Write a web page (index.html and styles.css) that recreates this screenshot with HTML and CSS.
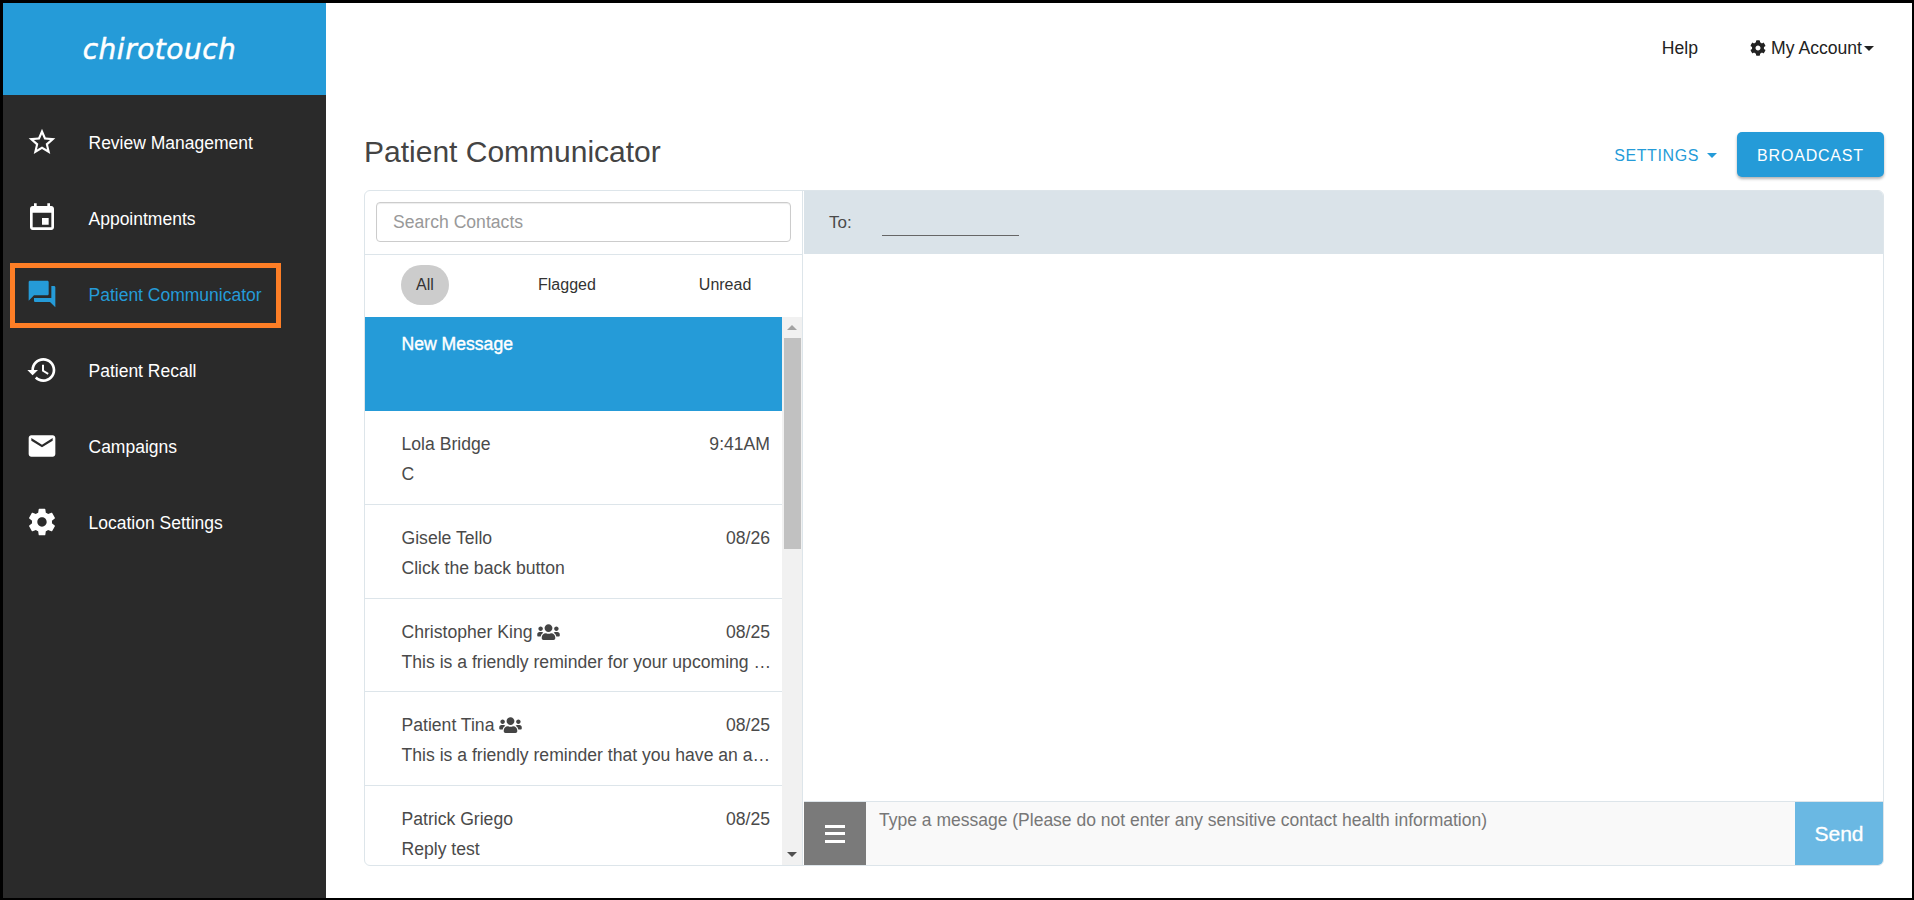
FILE: index.html
```html
<!DOCTYPE html>
<html lang="en">
<head>
    <meta charset="UTF-8">
    <meta name="viewport" content="width=device-width, initial-scale=1.0">
    <title>Patient Communicator</title>
    <link rel="stylesheet" href="styles.css">
</head>
<body>
    <div class="frame">
        <aside class="sidebar">
            <div class="brand"><span class="brand-name">chirotouch</span></div>
            <nav class="nav">
                <a class="nav-item">
                    <svg class="nav-icon" viewBox="0 0 24 24"><path d="M22 9.24l-7.19-.62L12 2 9.19 8.63 2 9.24l5.46 4.73L5.82 21 12 17.27 18.18 21l-1.63-7.03L22 9.24zM12 15.4l-3.76 2.27 1-4.28-3.32-2.88 4.38-.38L12 6.1l1.71 4.04 4.38.38-3.32 2.88 1 4.28L12 15.4z"/></svg>
                    <span>Review Management</span>
                </a>
                <a class="nav-item">
                    <svg class="nav-icon" viewBox="0 0 24 24"><path d="M17 12h-5v5h5v-5zM16 1v2H8V1H6v2H5c-1.11 0-1.99.9-1.99 2L3 19c0 1.1.89 2 2 2h14c1.1 0 2-.9 2-2V5c0-1.1-.9-2-2-2h-1V1h-2zm3 18H5V8h14v11z"/></svg>
                    <span>Appointments</span>
                </a>
                <a class="nav-item active">
                    <svg class="nav-icon" viewBox="0 0 24 24"><path d="M21 6h-2v9H6v2c0 .55.45 1 1 1h11l4 4V7c0-.55-.45-1-1-1zm-4 6V3c0-.55-.45-1-1-1H3c-.55 0-1 .45-1 1v14l4-4h10c.55 0 1-.45 1-1z"/></svg>
                    <span>Patient Communicator</span>
                </a>
                <a class="nav-item">
                    <svg class="nav-icon" viewBox="0 0 24 24"><path d="M13 3c-4.97 0-9 4.03-9 9H1l3.89 3.89.07.14L9 12H6c0-3.87 3.13-7 7-7s7 3.13 7 7-3.13 7-7 7c-1.93 0-3.68-.79-4.94-2.06l-1.42 1.42C8.27 19.99 10.51 21 13 21c4.97 0 9-4.03 9-9s-4.03-9-9-9zm-1 5v5l4.28 2.54.72-1.21-3.5-2.08V8H12z"/></svg>
                    <span>Patient Recall</span>
                </a>
                <a class="nav-item">
                    <svg class="nav-icon" viewBox="0 0 24 24"><path d="M20 4H4c-1.1 0-1.99.9-1.99 2L2 18c0 1.1.9 2 2 2h16c1.1 0 2-.9 2-2V6c0-1.1-.9-2-2-2zm0 4l-8 5-8-5V6l8 5 8-5v2z"/></svg>
                    <span>Campaigns</span>
                </a>
                <a class="nav-item">
                    <svg class="nav-icon" viewBox="0 0 24 24"><path d="M19.43 12.98c.04-.32.07-.64.07-.98s-.03-.66-.07-.98l2.11-1.65c.19-.15.24-.42.12-.64l-2-3.46c-.12-.22-.39-.3-.61-.22l-2.49 1c-.52-.4-1.08-.73-1.69-.98l-.38-2.65C14.46 2.18 14.25 2 14 2h-4c-.25 0-.46.18-.49.42l-.38 2.65c-.61.25-1.17.59-1.69.98l-2.49-1c-.23-.09-.49 0-.61.22l-2 3.46c-.13.22-.07.49.12.64l2.11 1.65c-.04.32-.07.65-.07.98s.03.66.07.98l-2.11 1.65c-.19.15-.24.42-.12.64l2 3.46c.12.22.39.3.61.22l2.49-1c.52.4 1.08.73 1.69.98l.38 2.65c.03.24.24.42.49.42h4c.25 0 .46-.18.49-.42l.38-2.65c.61-.25 1.17-.59 1.69-.98l2.49 1c.23.09.49 0 .61-.22l2-3.46c.12-.22.07-.49-.12-.64l-2.11-1.65zM12 15.5c-1.93 0-3.5-1.57-3.5-3.5s1.57-3.5 3.5-3.5 3.5 1.57 3.5 3.5-1.57 3.5-3.5 3.5z"/></svg>
                    <span>Location Settings</span>
                </a>
            </nav>
            <div class="highlight-box"></div>
        </aside>

        <main class="main">
            <header class="topbar">
                <a class="top-link help-link">Help</a>
                <a class="top-link">
                    <svg class="gear-icon" viewBox="0 0 512 512"><path d="M487.4 315.7l-42.6-24.6c4.3-23.2 4.3-47 0-70.2l42.6-24.6c4.9-2.8 7.1-8.6 5.5-14-11.1-35.6-30-67.8-54.7-94.6-3.8-4.1-10-5.1-14.8-2.3L380.8 110c-17.9-15.4-38.5-27.3-60.8-35.1V25.8c0-5.6-3.9-10.5-9.4-11.7-36.7-8.2-74.3-7.8-109.2 0-5.5 1.2-9.4 6.1-9.4 11.7V75c-22.2 7.9-42.8 19.8-60.8 35.1L88.7 85.5c-4.9-2.8-11-1.9-14.8 2.3-24.7 26.7-43.6 58.9-54.7 94.6-1.7 5.4.6 11.2 5.5 14L67.3 221c-4.3 23.2-4.3 47 0 70.2l-42.6 24.6c-4.9 2.8-7.1 8.6-5.5 14 11.1 35.6 30 67.8 54.7 94.6 3.8 4.1 10 5.1 14.8 2.3l42.6-24.6c17.9 15.4 38.5 27.3 60.8 35.1v49.2c0 5.6 3.9 10.5 9.4 11.7 36.7 8.2 74.3 7.8 109.2 0 5.5-1.2 9.4-6.1 9.4-11.7v-49.2c22.2-7.9 42.8-19.8 60.8-35.1l42.6 24.6c4.9 2.8 11 1.9 14.8-2.3 24.7-26.7 43.6-58.9 54.7-94.6 1.5-5.5-.7-11.3-5.6-14.1zM256 336c-44.1 0-80-35.9-80-80s35.9-80 80-80 80 35.9 80 80-35.9 80-80 80z"/></svg>
                    My Account<span class="caret"></span>
                </a>
            </header>

            <div class="title-row">
                <h1 class="page-title">Patient Communicator</h1>
                <div class="title-actions">
                    <a class="settings-link">SETTINGS<span class="caret caret-blue"></span></a>
                    <button class="broadcast-btn">BROADCAST</button>
                </div>
            </div>

            <section class="panel">
                <div class="contacts">
                    <div class="search-box">
                        <input class="search-input" type="text" placeholder="Search Contacts">
                    </div>
                    <div class="tabs">
                        <span class="tab tab-all">All</span>
                        <span class="tab tab-flagged">Flagged</span>
                        <span class="tab">Unread</span>
                    </div>
                    <div class="list-wrap">
                        <ul class="contact-list">
                            <li class="contact new-message">
                                <div class="contact-top"><span>New Message</span></div>
                            </li>
                            <li class="contact">
                                <div class="contact-top"><span>Lola Bridge</span><span>9:41AM</span></div>
                                <div class="contact-msg">C</div>
                            </li>
                            <li class="contact">
                                <div class="contact-top"><span>Gisele Tello</span><span>08/26</span></div>
                                <div class="contact-msg">Click the back button</div>
                            </li>
                            <li class="contact">
                                <div class="contact-top">
                                    <span>Christopher King <svg class="group-icon" viewBox="0 0 640 512"><path d="M96 224c35.3 0 64-28.7 64-64s-28.7-64-64-64-64 28.7-64 64 28.7 64 64 64zm448 0c35.3 0 64-28.7 64-64s-28.7-64-64-64-64 28.7-64 64 28.7 64 64 64zm32 32h-64c-17.6 0-33.5 7.1-45.1 18.6 40.3 22.1 68.9 62 75.1 109.4h66c17.7 0 32-14.3 32-32v-32c0-35.3-28.7-64-64-64zm-256 0c61.9 0 112-50.1 112-112S381.9 32 320 32 208 82.1 208 144s50.1 112 112 112zm76.8 32h-8.3c-20.8 10-43.9 16-68.5 16s-47.6-6-68.5-16h-8.3C179.6 288 128 339.6 128 403.2V432c0 26.5 21.5 48 48 48h288c26.5 0 48-21.5 48-48v-28.8c0-63.6-51.6-115.2-115.2-115.2zm-223.7-13.4C161.5 263.1 145.6 256 128 256H64c-35.3 0-64 28.7-64 64v32c0 17.7 14.3 32 32 32h65.9c6.3-47.4 34.9-87.3 75.2-109.4z"/></svg></span>
                                    <span>08/25</span>
                                </div>
                                <div class="contact-msg">This is a friendly reminder for your upcoming …</div>
                            </li>
                            <li class="contact">
                                <div class="contact-top">
                                    <span>Patient Tina <svg class="group-icon" viewBox="0 0 640 512"><path d="M96 224c35.3 0 64-28.7 64-64s-28.7-64-64-64-64 28.7-64 64 28.7 64 64 64zm448 0c35.3 0 64-28.7 64-64s-28.7-64-64-64-64 28.7-64 64 28.7 64 64 64zm32 32h-64c-17.6 0-33.5 7.1-45.1 18.6 40.3 22.1 68.9 62 75.1 109.4h66c17.7 0 32-14.3 32-32v-32c0-35.3-28.7-64-64-64zm-256 0c61.9 0 112-50.1 112-112S381.9 32 320 32 208 82.1 208 144s50.1 112 112 112zm76.8 32h-8.3c-20.8 10-43.9 16-68.5 16s-47.6-6-68.5-16h-8.3C179.6 288 128 339.6 128 403.2V432c0 26.5 21.5 48 48 48h288c26.5 0 48-21.5 48-48v-28.8c0-63.6-51.6-115.2-115.2-115.2zm-223.7-13.4C161.5 263.1 145.6 256 128 256H64c-35.3 0-64 28.7-64 64v32c0 17.7 14.3 32 32 32h65.9c6.3-47.4 34.9-87.3 75.2-109.4z"/></svg></span>
                                    <span>08/25</span>
                                </div>
                                <div class="contact-msg">This is a friendly reminder that you have an a…</div>
                            </li>
                            <li class="contact">
                                <div class="contact-top"><span>Patrick Griego</span><span>08/25</span></div>
                                <div class="contact-msg">Reply test</div>
                            </li>
                        </ul>
                        <div class="scrollbar">
                            <span class="scroll-up"></span>
                            <div class="scroll-track"><div class="scroll-thumb"></div></div>
                            <span class="scroll-down"></span>
                        </div>
                    </div>
                </div>

                <div class="conversation">
                    <div class="to-bar">
                        <span class="to-label">To:</span>
                        <span class="to-line"></span>
                    </div>
                    <div class="thread"></div>
                    <div class="composer">
                        <button class="menu-btn"><span></span><span></span><span></span></button>
                        <div class="composer-text">Type a message (Please do not enter any sensitive contact health information)</div>
                        <button class="send-btn">Send</button>
                    </div>
                </div>
            </section>
        </main>
    </div>
</body>
</html>
```

FILE: styles.css
```css
* {
    box-sizing: border-box;
}
body {
    margin: 0;
    font-family: "Liberation Sans", Arial, sans-serif;
    font-size: 17.6px;
    color: #4a4a4a;
    background: #fff;
}
.frame {
    display: flex;
    height: 900px;
    border-style: solid;
    border-color: #000;
    border-width: 3px 2px 2px 3px;
}

/* sidebar */
.sidebar {
    position: relative;
    width: 323px;
    flex-shrink: 0;
    background: #2a2a2a;
}
.brand {
    display: flex;
    align-items: center;
    justify-content: center;
    height: 92px;
    padding: 1px 10px 0 0;
    background: #259bd8;
}
.brand-name {
    font-family: "DejaVu Sans", sans-serif;
    font-size: 28px;
    font-weight: 200;
    font-style: italic;
    letter-spacing: 0.5px;
    color: #fff;
    -webkit-text-stroke: 0.5px #fff;
}
.nav {
    padding-top: 9px;
}
.nav-item {
    display: flex;
    align-items: center;
    height: 76px;
    padding-left: 23px;
    font-size: 17.5px;
    color: #fff;
}
.nav-item span {
    margin-top: 2px;
}
.nav-item.active {
    color: #259bd8;
}
.nav-icon {
    width: 32px;
    height: 32px;
    margin-right: 30.5px;
    fill: currentColor;
}
.highlight-box {
    position: absolute;
    left: 7px;
    top: 260px;
    width: 271px;
    height: 65px;
    border: 5px solid #fd7e26;
}

/* main area */
.main {
    flex: 1;
    display: flex;
    flex-direction: column;
    min-width: 0;
    padding: 0 28px 32px 38px;
}
.topbar {
    display: flex;
    align-items: center;
    justify-content: flex-end;
    height: 90px;
    padding-right: 10px;
    color: #222;
}
.top-link {
    display: flex;
    align-items: center;
}
.help-link {
    margin-right: 52px;
}
.gear-icon {
    width: 16px;
    height: 16px;
    margin-right: 5px;
    fill: #222;
}
.caret {
    width: 0;
    height: 0;
    margin-left: 2px;
    border-left: 5px solid transparent;
    border-right: 5px solid transparent;
    border-top: 5px solid #222;
}
.caret-blue {
    margin-left: 8px;
    border-top-color: #259bd8;
}
.title-row {
    display: flex;
    align-items: center;
    justify-content: space-between;
    height: 45px;
    margin-top: 39px;
    margin-bottom: 13px;
}
.page-title {
    margin: 0 0 5px;
    font-size: 30px;
    font-weight: 400;
    color: #444;
}
.title-actions {
    display: flex;
    align-items: center;
}
.settings-link {
    display: flex;
    align-items: center;
    margin: 2px 20px 0 0;
    font-size: 16px;
    letter-spacing: 0.6px;
    color: #259bd8;
}
.broadcast-btn {
    width: 147px;
    height: 45px;
    padding: 2px 0 0;
    border: none;
    border-radius: 5px;
    font-family: inherit;
    font-size: 16px;
    letter-spacing: 0.8px;
    color: #fff;
    background: #259bd8;
    box-shadow: 0 2px 3px rgba(0, 0, 0, 0.3);
}

/* panel */
.panel {
    flex: 1;
    display: flex;
    min-height: 0;
    border: 1px solid #dde5ea;
    border-radius: 6px;
    overflow: hidden;
}
.contacts {
    display: flex;
    flex-direction: column;
    width: 438px;
    flex-shrink: 0;
    margin-right: 1px;
    border-right: 1px solid #dde5ea;
}
.search-box {
    height: 64px;
    padding: 11px 11px 12px;
    border-bottom: 1px solid #dde5ea;
}
.search-input {
    display: block;
    width: 100%;
    height: 40px;
    padding: 0 16px;
    border: 1px solid #ccc;
    border-radius: 4px;
    font-family: inherit;
    font-size: 17.6px;
    box-shadow: inset 0 1px 1px rgba(0, 0, 0, 0.075);
}
.search-input::placeholder {
    color: #999;
}
.tabs {
    display: flex;
    align-items: center;
    height: 62px;
    padding: 0 0 2px 36px;
    font-size: 16px;
    color: #333;
}
.tab-all {
    width: 48px;
    height: 40px;
    margin-right: 89px;
    border-radius: 20px;
    line-height: 40px;
    text-align: center;
    background: #ccc;
}
.tab-flagged {
    margin-right: 103px;
}
.list-wrap {
    flex: 1;
    display: flex;
    min-height: 0;
}
.contact-list {
    flex: 1;
    min-width: 0;
    margin: 0;
    padding: 0;
    list-style: none;
    overflow: hidden;
}
.contact {
    height: 93.75px;
    padding: 18px 12px 0 36.5px;
    border-bottom: 1px solid #dde5ea;
}
.contact-top {
    display: flex;
    justify-content: space-between;
    line-height: 30px;
}
.contact-msg {
    line-height: 30px;
    white-space: nowrap;
}
.contact.new-message {
    height: 94px;
    padding-top: 12px;
    border-bottom: none;
    color: #fff;
    background: #259bd8;
    -webkit-text-stroke: 0.4px #fff;
}
.group-icon {
    width: 23px;
    height: 18px;
    vertical-align: -3px;
    fill: #444;
}

/* drawn scrollbar, list is not really scrollable */
.scrollbar {
    display: flex;
    flex-direction: column;
    align-items: center;
    width: 20px;
    flex-shrink: 0;
    background: #f1f1f1;
}
.scroll-up,
.scroll-down {
    flex-shrink: 0;
    width: 0;
    height: 0;
    margin: 8px 0;
    border-left: 5px solid transparent;
    border-right: 5px solid transparent;
}
.scroll-up {
    border-bottom: 5px solid #a3a3a3;
}
.scroll-down {
    border-top: 5px solid #505050;
}
.scroll-track {
    flex: 1;
    width: 17px;
}
.scroll-thumb {
    height: 211px;
    background: #c1c1c1;
}

/* conversation */
.conversation {
    flex: 1;
    display: flex;
    flex-direction: column;
    min-width: 0;
}
.to-bar {
    display: flex;
    align-items: center;
    height: 63px;
    padding-left: 25px;
    background: #dae3e9;
}
.to-label {
    width: 53px;
    font-size: 17px;
}
.to-line {
    width: 137px;
    height: 1px;
    margin-top: 26px;
    background: #666;
}
.thread {
    flex: 1;
}
.composer {
    display: flex;
    height: 64px;
    border-top: 1px solid #dde5ea;
    background: #f9f9f9;
}
.menu-btn {
    display: flex;
    flex-direction: column;
    align-items: center;
    justify-content: center;
    gap: 4.5px;
    width: 62px;
    padding: 0;
    border: none;
    background: #7a7a7a;
}
.menu-btn span {
    width: 20px;
    height: 3px;
    background: #fff;
}
.composer-text {
    flex: 1;
    padding: 8px 13px;
    font-size: 17.5px;
    line-height: 20px;
    color: #777;
}
.send-btn {
    width: 88px;
    border: none;
    font-family: inherit;
    font-size: 21px;
    color: #fff;
    background: #6ab8e3;
    -webkit-text-stroke: 0.3px #fff;
}
```
